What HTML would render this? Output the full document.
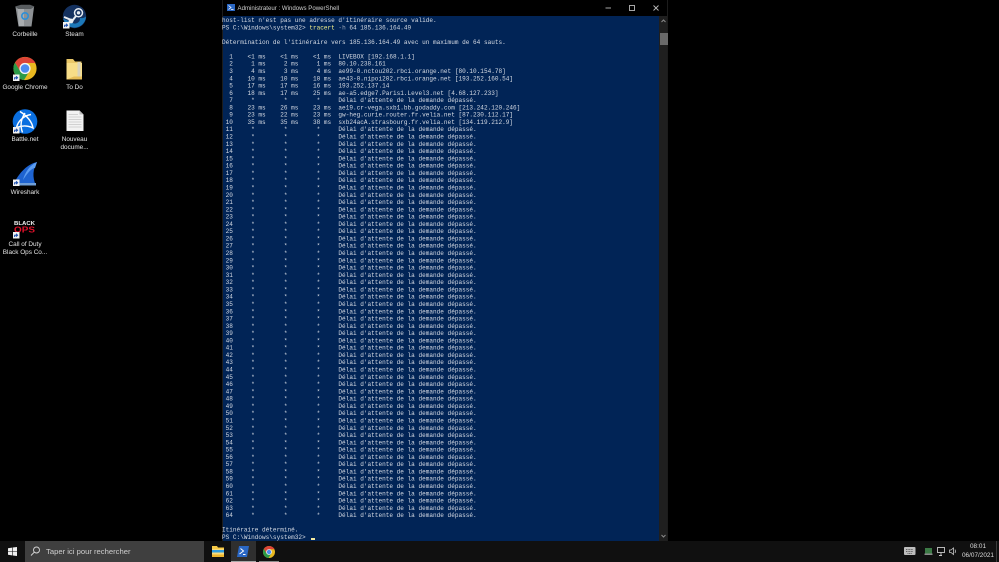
<!DOCTYPE html>
<html><head><meta charset="utf-8">
<style>
html,body{margin:0;padding:0;background:#000;width:999px;height:562px;overflow:hidden}
body{position:relative;font-family:"Liberation Sans",sans-serif}
.a{position:absolute}
.l{position:absolute;width:50px;text-align:center;color:#e4e4e4;font-size:6.4px;line-height:7.6px;filter:blur(.2px)}
pre{position:absolute;left:222px;top:17.1px;margin:0;font:12.14px/14.56px "Liberation Mono",monospace;color:#d6dbe4;white-space:pre;transform:scale(.5);transform-origin:0 0;filter:blur(.4px)}
pre b{font-weight:normal;color:#f3f08a}
pre i{font-style:normal;color:#9aa5b8}
svg{position:absolute;overflow:visible}
</style></head><body>

<!-- desktop icons -->
<svg style="left:0;top:0" width="110" height="260" viewBox="0 0 110 260">
 <defs><g id="sc"><rect width="6.5" height="6.5" fill="#f2f2f2"/><path d="M1.6 5V3.2H4M3 1.8L4.6 3.2 3 4.6" fill="none" stroke="#1c4fb0" stroke-width="1"/></g></defs>
 <!-- bin -->
 <path d="M15.5 7H34L31.5 26.5H18.5Z" fill="#8d9194"/><path d="M15 6.5L21 4.7H30L34.5 6.5 31 9H18.5Z" fill="#595d60"/><path d="M17.5 9H24L24 26H19Z" fill="#a9adb0"/>
 <circle cx="25" cy="16" r="3.2" fill="none" stroke="#2c8fd8" stroke-width="1.6"/>
 <!-- steam -->
 <circle cx="74.5" cy="16.5" r="11.7" fill="#14315f"/><path d="M63 18.5L72 22.5A5 5 0 0 0 80 18 7 7 0 0 0 86 16.5 11.7 11.7 0 0 1 65 23Z" fill="#1c78b8"/>
 <circle cx="78.5" cy="12.8" r="4" fill="none" stroke="#e8edf2" stroke-width="1.5"/><circle cx="78.5" cy="12.8" r="1.7" fill="#e8edf2"/>
 <path d="M64 17L72.5 20.5 76 16" fill="none" stroke="#e8edf2" stroke-width="2"/><circle cx="71" cy="21" r="2.4" fill="#e8edf2"/>
 <use href="#sc" x="63" y="22"/>
 <!-- chrome -->
 <circle cx="25" cy="68.5" r="11.6" fill="#e9b820"/>
 <path d="M25 57A11.6 11.6 0 0 0 15 62.6L20 71 25 63H35.5A11.6 11.6 0 0 0 25 57Z" fill="#dd4437"/>
 <path d="M15 62.6A11.6 11.6 0 0 0 24 80L29.5 71 20 71Z" fill="#2b9a48"/>
 <circle cx="25" cy="68.5" r="5.6" fill="#f4f4f4"/><circle cx="25" cy="68.5" r="4.3" fill="#4d8cf0"/>
 <use href="#sc" x="13" y="74.5"/>
 <!-- to do folder -->
 <path d="M66.500 59H73L75 61.500H81.500V79.500H66.500Z" fill="#e9c768"/><path d="M66.500 63H82V79.500H66.500Z" fill="#f7dd88"/><rect x="77.500" y="62" width="3" height="17" fill="#d8d3bd"/><path d="M66.500 79.500L74 76.500H82V79.500Z" fill="#e6bd58"/>
 <!-- battle.net -->
 <circle cx="25" cy="121.500" r="12.300" fill="#0a6fe0"/>
 <path d="M20 111.500C27 116 32 122 33 128 28 125.500 22 125.500 16.500 127.500 18 121 24 115.500 31 114.500M25 113C21 119 20 126 22.500 132.500" fill="none" stroke="#fff" stroke-width="1.400"/>
 <use href="#sc" x="13" y="127"/>
 <!-- doc -->
 <path d="M66.500 110.500H79.500L83.500 114.500V131H66.500Z" fill="#f2f2f2"/><path d="M79.500 110.500V114.500H83.500Z" fill="#bdbdbd"/>
 <path d="M68.500 114.500H78M68.500 117H81.500M68.500 119.500H81.500M68.500 122H81.500M68.500 124.500H81.500M68.500 127H81.500" stroke="#c6c6c6" stroke-width=".8"/>
 <!-- wireshark -->
 <path d="M37 162C28 164 19 172 13 185.500H36C32 177 33 169 37 162Z" fill="#1e63d0"/><path d="M37 162C30 165 25 172 23 180 28 172 32 168 35 168Z" fill="#5b9cf0"/><rect x="14" y="183" width="22" height="2.500" fill="#6f9fd8"/>
 <use href="#sc" x="13" y="179.500"/>
 <!-- black ops -->
 <text x="14" y="225" font-family="Liberation Sans" font-size="5" font-weight="bold" fill="#f0f0f0" textLength="21" lengthAdjust="spacingAndGlyphs">BLACK</text>
 <text x="14" y="232.500" font-family="Liberation Sans" font-size="8" font-weight="bold" fill="#e0102a" textLength="21" lengthAdjust="spacingAndGlyphs">OPS</text>
 <use href="#sc" x="13" y="232"/>
</svg>
<div class="l" style="left:0;top:31px">Corbeille</div>
<div class="l" style="left:49.500px;top:31px">Steam</div>
<div class="l" style="left:-3px;width:56px;top:83.500px">Google Chrome</div>
<div class="l" style="left:49.500px;top:83.500px">To Do</div>
<div class="l" style="left:0;top:136px">Battle.net</div>
<div class="l" style="left:49.500px;top:136px">Nouveau<br>docume...</div>
<div class="l" style="left:0;top:188.500px">Wireshark</div>
<div class="l" style="left:-3px;width:56px;top:241px">Call of Duty<br>Black Ops Co...</div>

<!-- console window -->
<div class="a" style="left:222px;top:0;width:445px;height:16px;background:#000"></div>
<div class="a" style="left:222px;top:0;width:1px;height:541px;background:#1c1c1c"></div>
<div class="a" style="left:667px;top:0;width:1px;height:541px;background:#1c1c1c"></div>
<svg style="left:227px;top:4px" width="8" height="7" viewBox="0 0 8 7"><rect width="8" height="7" fill="#2a67c4"/><path d="M1.500 1.500L4 3.500 1.500 5.500M4 5.500H6.500" fill="none" stroke="#fff" stroke-width=".8"/></svg>
<div class="a" style="left:237.500px;top:4.500px;font-size:6.100px;line-height:8px;color:#cfcfcf;white-space:pre;filter:blur(.2px)">Administrateur : Windows PowerShell</div>
<svg style="left:600px;top:0" width="67" height="16" viewBox="0 0 67 16" fill="none" stroke="#b8b8b8" stroke-width=".9">
 <path d="M5.500 8H11"/><rect x="29.500" y="5.500" width="5" height="5"/><path d="M53.500 5.500L58.500 10.500M58.500 5.500L53.500 10.500"/>
</svg>
<div class="a" style="left:223px;top:16px;width:436px;height:525px;background:#012456"></div>
<div class="a" style="left:659px;top:16px;width:8px;height:525px;background:#1f1f1f"></div>
<div class="a" style="left:660px;top:33px;width:7.500px;height:12px;background:#6a6a6a"></div>
<svg style="left:659px;top:16px" width="8" height="525" viewBox="0 0 8 525" fill="none" stroke="#8a8a8a" stroke-width="1"><path d="M2.500 6L4.500 4 6.500 6"/><path d="M2.500 519L4.500 521 6.500 519"/></svg>

<pre>host-list n'est pas une adresse d'itinéraire source valide.
PS C:\Windows\system32&gt; <b>tracert</b> <i>-h</i> 64 185.136.164.49

Détermination de l'itinéraire vers 185.136.164.49 avec un maximum de 64 sauts.

  1    &lt;1 ms    &lt;1 ms    &lt;1 ms  LIVEBOX [192.168.1.1]
  2     1 ms     2 ms     1 ms  80.10.238.161
  3     4 ms     3 ms     4 ms  ae99-0.nctou202.rbci.orange.net [80.10.154.78]
  4    10 ms    10 ms    10 ms  ae43-0.nipoi202.rbci.orange.net [193.252.160.54]
  5    17 ms    17 ms    16 ms  193.252.137.14
  6    18 ms    17 ms    25 ms  ae-a5.edge7.Paris1.Level3.net [4.68.127.233]
  7     *        *        *     Délai d'attente de la demande dépassé.
  8    23 ms    26 ms    23 ms  ae19.cr-vega.sxb1.bb.godaddy.com [213.242.120.246]
  9    23 ms    22 ms    23 ms  gw-heg.curie.router.fr.velia.net [87.230.112.17]
 10    35 ms    35 ms    38 ms  sxb24acA.strasbourg.fr.velia.net [134.119.212.9]
 11     *        *        *     Délai d'attente de la demande dépassé.
 12     *        *        *     Délai d'attente de la demande dépassé.
 13     *        *        *     Délai d'attente de la demande dépassé.
 14     *        *        *     Délai d'attente de la demande dépassé.
 15     *        *        *     Délai d'attente de la demande dépassé.
 16     *        *        *     Délai d'attente de la demande dépassé.
 17     *        *        *     Délai d'attente de la demande dépassé.
 18     *        *        *     Délai d'attente de la demande dépassé.
 19     *        *        *     Délai d'attente de la demande dépassé.
 20     *        *        *     Délai d'attente de la demande dépassé.
 21     *        *        *     Délai d'attente de la demande dépassé.
 22     *        *        *     Délai d'attente de la demande dépassé.
 23     *        *        *     Délai d'attente de la demande dépassé.
 24     *        *        *     Délai d'attente de la demande dépassé.
 25     *        *        *     Délai d'attente de la demande dépassé.
 26     *        *        *     Délai d'attente de la demande dépassé.
 27     *        *        *     Délai d'attente de la demande dépassé.
 28     *        *        *     Délai d'attente de la demande dépassé.
 29     *        *        *     Délai d'attente de la demande dépassé.
 30     *        *        *     Délai d'attente de la demande dépassé.
 31     *        *        *     Délai d'attente de la demande dépassé.
 32     *        *        *     Délai d'attente de la demande dépassé.
 33     *        *        *     Délai d'attente de la demande dépassé.
 34     *        *        *     Délai d'attente de la demande dépassé.
 35     *        *        *     Délai d'attente de la demande dépassé.
 36     *        *        *     Délai d'attente de la demande dépassé.
 37     *        *        *     Délai d'attente de la demande dépassé.
 38     *        *        *     Délai d'attente de la demande dépassé.
 39     *        *        *     Délai d'attente de la demande dépassé.
 40     *        *        *     Délai d'attente de la demande dépassé.
 41     *        *        *     Délai d'attente de la demande dépassé.
 42     *        *        *     Délai d'attente de la demande dépassé.
 43     *        *        *     Délai d'attente de la demande dépassé.
 44     *        *        *     Délai d'attente de la demande dépassé.
 45     *        *        *     Délai d'attente de la demande dépassé.
 46     *        *        *     Délai d'attente de la demande dépassé.
 47     *        *        *     Délai d'attente de la demande dépassé.
 48     *        *        *     Délai d'attente de la demande dépassé.
 49     *        *        *     Délai d'attente de la demande dépassé.
 50     *        *        *     Délai d'attente de la demande dépassé.
 51     *        *        *     Délai d'attente de la demande dépassé.
 52     *        *        *     Délai d'attente de la demande dépassé.
 53     *        *        *     Délai d'attente de la demande dépassé.
 54     *        *        *     Délai d'attente de la demande dépassé.
 55     *        *        *     Délai d'attente de la demande dépassé.
 56     *        *        *     Délai d'attente de la demande dépassé.
 57     *        *        *     Délai d'attente de la demande dépassé.
 58     *        *        *     Délai d'attente de la demande dépassé.
 59     *        *        *     Délai d'attente de la demande dépassé.
 60     *        *        *     Délai d'attente de la demande dépassé.
 61     *        *        *     Délai d'attente de la demande dépassé.
 62     *        *        *     Délai d'attente de la demande dépassé.
 63     *        *        *     Délai d'attente de la demande dépassé.
 64     *        *        *     Délai d'attente de la demande dépassé.

Itinéraire déterminé.
PS C:\Windows\system32&gt;</pre>
<div class="a" style="left:310.500px;top:538px;width:4px;height:2px;background:#f3e9a0"></div>

<!-- taskbar -->
<div class="a" style="left:0;top:541px;width:999px;height:21px;background:#101010"></div>
<svg style="left:8px;top:547px" width="9" height="9" viewBox="0 0 9 9" fill="#f0f0f0"><path d="M0 1.200L4 .6V4.200H0ZM4.600 .5L9 0V4.200H4.600ZM0 4.800H4V8.400L0 7.800ZM4.600 4.800H9V9L4.600 8.500Z"/></svg>
<div class="a" style="left:25px;top:541px;width:179px;height:21px;background:#3f3f3f"></div>
<svg style="left:30px;top:546px" width="11" height="11" viewBox="0 0 11 11" fill="none" stroke="#d8d8d8" stroke-width=".9"><circle cx="6.500" cy="4" r="3"/><path d="M4.300 6.200L1 9.500"/></svg>
<div class="a" style="left:46px;top:547px;font-size:7.650px;line-height:9px;color:#cfcfcf;white-space:pre;filter:blur(.2px)">Taper ici pour rechercher</div>
<svg style="left:212px;top:546px" width="12" height="11" viewBox="0 0 12 11"><path d="M0 0H5L6 1.500H12V11H0Z" fill="#f6c945"/><rect x="0" y="3" width="12" height="6" fill="#f9dc7c"/><rect x="0" y="4" width="12" height="2.500" fill="#2d9be0"/><rect x="0" y="8.500" width="12" height="2.500" fill="#eeb52c"/></svg>
<div class="a" style="left:231px;top:541px;width:25px;height:21px;background:#2f2f2f"></div>
<div class="a" style="left:231px;top:561px;width:25px;height:1px;background:#a8a8a8"></div>
<svg style="left:237px;top:546px" width="12" height="11" viewBox="0 0 12 11"><path d="M2 0H12L10 11H0Z" fill="#2a67c4"/><path d="M3.500 2.500L6.500 5 2.500 8M6 8.500H8.500" fill="none" stroke="#fff" stroke-width="1"/></svg>
<svg style="left:263px;top:545.500px" width="12" height="12" viewBox="0 0 12 12">
 <circle cx="6" cy="6" r="6" fill="#e9b820"/><path d="M6 0A6 6 0 0 0 .9 2.900L3.400 7.400 6 3.300H11.500A6 6 0 0 0 6 0Z" fill="#dd4437"/><path d="M.9 2.900A6 6 0 0 0 5.500 12L8.500 7.400 3.400 7.400Z" fill="#2b9a48"/><circle cx="6" cy="6" r="2.900" fill="#f4f4f4"/><circle cx="6" cy="6" r="2.200" fill="#4d8cf0"/>
</svg>
<div class="a" style="left:259px;top:561px;width:20px;height:1px;background:#8a8a8a"></div>

<!-- tray -->
<svg style="left:900px;top:545px" width="60" height="13" viewBox="0 0 60 13" fill="none">
 <rect x="4" y="2" width="11.500" height="8" rx="1" fill="#bdbdbd"/><path d="M6 4.500H13M6 6.500H13M7.500 8.500H12" stroke="#444" stroke-width=".8" stroke-dasharray="1 .6"/>
 <rect x="25" y="3" width="7" height="6.500" fill="#3c7a46"/><rect x="24.500" y="8.500" width="8" height="1.500" fill="#8a8a8a"/>
 <rect x="37.500" y="2.500" width="7" height="5" stroke="#c8c8c8" stroke-width=".9"/><path d="M41 7.500V10M39 10.500H42" stroke="#c8c8c8" stroke-width=".9"/>
 <path d="M49.500 5H51L53.500 3V9.500L51 7.500H49.500Z" stroke="#c8c8c8" stroke-width=".8"/><path d="M55 4.500Q56 6.250 55 8" stroke="#c8c8c8" stroke-width=".7"/>
</svg>
<div class="a" style="left:960px;top:541.500px;width:36px;text-align:center;font-size:6.400px;line-height:9.600px;color:#dcdcdc;white-space:pre;filter:blur(.2px)">08:01
06/07/2021</div>
<div class="a" style="left:996px;top:541px;width:1px;height:21px;background:#3c3c3c"></div>
</body></html>
